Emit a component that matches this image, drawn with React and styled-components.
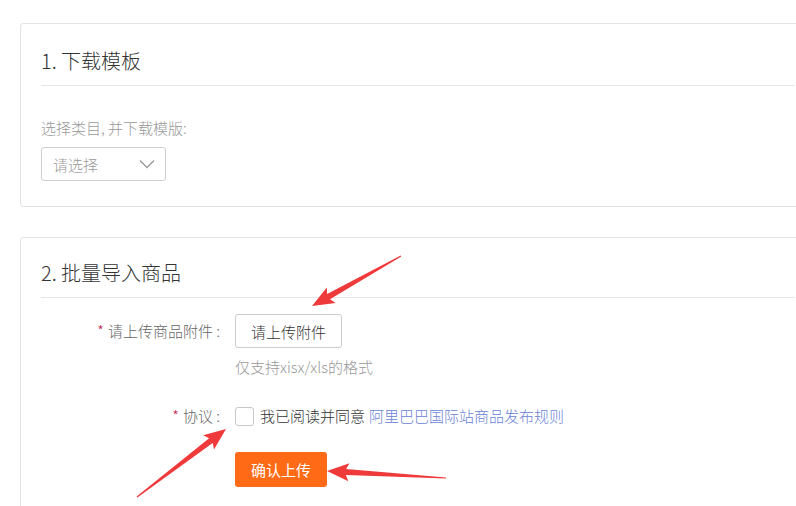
import React from 'react';
import styled, {createGlobalStyle} from 'styled-components';

const GlobalStyle = createGlobalStyle`
  html, body {
    margin: 0;
    padding: 0;
    background: #fff;
  }
  body {
    font-family: "Noto Sans CJK SC", "Noto Sans", sans-serif;
    font-weight: 300;
    color: #333;
  }
`;

const Page = styled.div`
  position: relative;
  width: 796px;
  height: 506px;
  overflow: hidden;
  padding: 23px 0 0 20px;
  box-sizing: border-box;
  display: flex;
  flex-direction: column;
  gap: 30px;
`;

const Card = styled.section`
  border: 1px solid #e3e3e3;
  border-radius: 3px;
  margin-right: -20px;
  padding: 0 20px ${p => p.$bottom || 25}px;
  background: #fff;
  flex-shrink: 0;
`;

const CardHeader = styled.div`
  height: ${p => p.$h || 49}px;
  padding-top: ${p => p.$pt || 12}px;
  border-bottom: 1px solid #e6e6e6;
  display: flex;
  align-items: center;
  font-size: 20px;
  line-height: 26px;
  color: #333;
`;

const Hint = styled.div`
  font-size: 15px;
  line-height: 20px;
  color: #999;
  margin-top: ${p => p.$top || 0}px;
`;

const Select = styled.div`
  width: 125px;
  height: 34px;
  margin-top: 9px;
  box-sizing: border-box;
  border: 1px solid #d0d0d0;
  border-radius: 3px;
  padding: 0 10px 0 11px;
  display: flex;
  align-items: center;
  justify-content: space-between;
  font-size: 15px;
  color: #999;
`;

const FormRow = styled.div`
  display: grid;
  grid-template-columns: 179px auto;
  column-gap: 15px;
  align-items: center;
  margin-top: ${p => p.$top || 0}px;
`;

const Label = styled.div`
  text-align: right;
  font-size: 15px;
  line-height: 20px;
  color: #666;
  white-space: pre;
`;

const Star = styled.span`
  color: #c7254e;
  margin-right: 4px;
`;

const Control = styled.div`
  display: flex;
  align-items: center;
`;

const GhostButton = styled.button`
  height: 34px;
  width: 107px;
  border: 1px solid #ccc;
  border-radius: 3px;
  background: #fff;
  font-family: inherit;
  font-weight: inherit;
  font-size: 15px;
  color: #333;
  padding: 0;
`;

const Checkbox = styled.span`
  width: 19px;
  height: 19px;
  box-sizing: border-box;
  border: 1px solid #c8c8c8;
  border-radius: 3px;
  background: #fff;
  margin-right: 6px;
`;

const AgreeText = styled.span`
  font-size: 15px;
  line-height: 20px;
  color: #333;
`;

const Link = styled.a`
  color: #6a7fd6;
  text-decoration: none;
  margin-left: 4px;
`;

const PrimaryButton = styled.button`
  width: 92px;
  height: 35px;
  border: none;
  border-radius: 3px;
  background: #ff6a17;
  color: #fff;
  font-family: inherit;
  font-weight: 400;
  font-size: 15px;
  padding: 0;
`;

const Annotations = styled.svg`
  position: absolute;
  left: 0;
  top: 0;
  pointer-events: none;
`;

function arrowPoints([tx, ty], [hx, hy], headLen = 19, headHalf = 9, neckHalf = 3, tailHalf = 0.6) {
  const len = Math.hypot(hx - tx, hy - ty);
  const dx = (hx - tx) / len;
  const dy = (hy - ty) / len;
  const nx = -dy;
  const ny = dx;
  const neck = [hx - dx * headLen, hy - dy * headLen];
  const wing = [hx - dx * (headLen + 3), hy - dy * (headLen + 3)];
  const pts = [
    [tx + nx * tailHalf, ty + ny * tailHalf],
    [neck[0] + nx * neckHalf, neck[1] + ny * neckHalf],
    [wing[0] + nx * headHalf, wing[1] + ny * headHalf],
    [hx, hy],
    [wing[0] - nx * headHalf, wing[1] - ny * headHalf],
    [neck[0] - nx * neckHalf, neck[1] - ny * neckHalf],
    [tx - nx * tailHalf, ty - ny * tailHalf],
  ];
  return pts.map(p => p.map(v => v.toFixed(1)).join(',')).join(' ');
}

const arrows = [
  {tail: [401, 256], tip: [312, 306]},
  {tail: [137, 497], tip: [226, 429]},
  {tail: [446, 478], tip: [327, 471]},
];

export default function App() {
  return (
    <>
      <GlobalStyle />
      <Page>
        <Card>
          <CardHeader>1. 下载模板</CardHeader>
          <Hint $top={32}>选择类目, 并下载模版:</Hint>
          <Select>
            <span>请选择</span>
            <svg width="16" height="10" viewBox="0 0 16 10">
              <polyline points="1,1.5 8,8.5 15,1.5" fill="none" stroke="#999" strokeWidth="1.3" />
            </svg>
          </Select>
        </Card>

        <Card $bottom={40}>
          <CardHeader $h={49} $pt={10}>2. 批量导入商品</CardHeader>
          <FormRow $top={16}>
            <Label><Star>*</Star>请上传商品附件 :</Label>
            <Control>
              <GhostButton>请上传附件</GhostButton>
            </Control>
          </FormRow>
          <FormRow>
            <span />
            <Hint $top={9}>仅支持xisx/xls的格式</Hint>
          </FormRow>
          <FormRow $top={29}>
            <Label><Star>*</Star>协议 :</Label>
            <Control>
              <Checkbox />
              <AgreeText>
                我已阅读并同意
                <Link href="#">阿里巴巴国际站商品发布规则</Link>
              </AgreeText>
            </Control>
          </FormRow>
          <FormRow $top={26}>
            <span />
            <Control>
              <PrimaryButton>确认上传</PrimaryButton>
            </Control>
          </FormRow>
        </Card>

        <Annotations width="796" height="506" viewBox="0 0 796 506">
          {arrows.map((a, i) => (
            <polygon key={i} points={arrowPoints(a.tail, a.tip)} fill="#ef3a3c" />
          ))}
        </Annotations>
      </Page>
    </>
  );
}
